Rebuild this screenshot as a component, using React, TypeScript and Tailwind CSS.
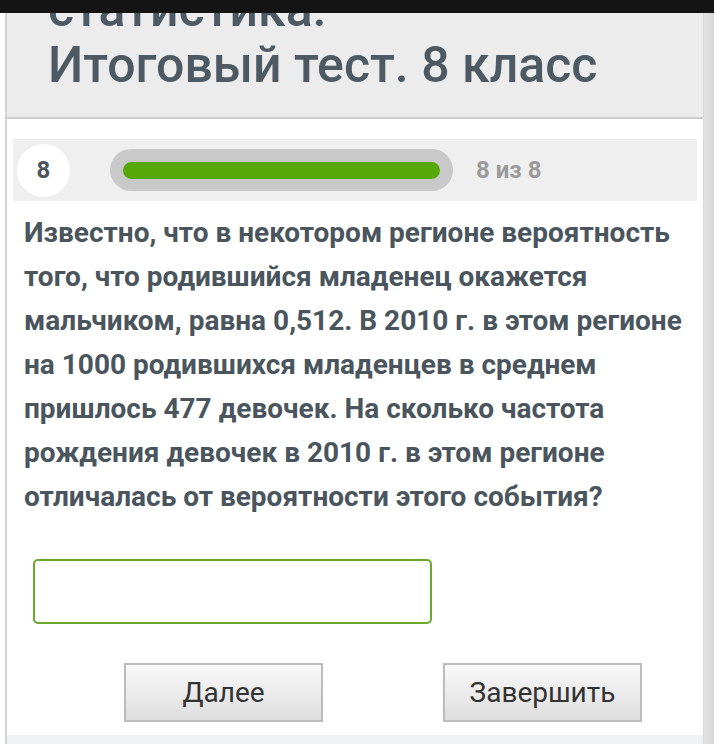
import React from 'react';

const lines = [
  'Известно, что в некотором регионе вероятность',
  'того, что родившийся младенец окажется',
  'мальчиком, равна 0,512. В 2010 г. в этом регионе',
  'на 1000 родившихся младенцев в среднем',
  'пришлось 477 девочек. На сколько частота',
  'рождения девочек в 2010 г. в этом регионе',
  'отличалась от вероятности этого события?',
];

export default function App() {
  return (
    <div className="relative w-[714px] h-[744px] bg-white overflow-hidden flex font-['Roboto',sans-serif]">
      <div className="w-[5px] bg-white" />
      <div className="w-[2px] bg-[#d3d3d3]" />

      <main className="w-[696px] flex flex-col bg-white">
        {/* header */}
        <div className="h-[119px] shrink-0 bg-[#ececec] border-b-2 border-[#cdcdcd] overflow-hidden pl-[41px]">
          <div className="mt-[-19px] text-[50px] leading-[56px] font-medium text-[#4e5a63]">
            <div>статистика:</div>
            <div>Итоговый тест. 8 класс</div>
          </div>
        </div>

        {/* progress */}
        <div className="mt-[20px] ml-[6px] w-[684px] h-[62px] bg-[#efefef] flex items-center pl-[4px]">
          <div className="w-[53px] h-[53px] rounded-full bg-white flex items-center justify-center text-[24px] font-bold text-[#4a555d]">
            8
          </div>
          <div className="ml-[40px] w-[343px] h-[42px] rounded-full bg-[#c9c9c9] flex items-center px-[13px]">
            <div className="w-full h-[17px] rounded-full bg-[#56a709]" />
          </div>
          <div className="ml-[23px] text-[24px] font-bold text-[#9a9a9a]">8 из 8</div>
        </div>

        {/* question */}
        <div className="mt-[10px] pl-[17px] text-[28px] leading-[44px] font-bold text-[#4a555d] whitespace-nowrap">
          {lines.map((l, i) => (
            <div key={i}>{l}</div>
          ))}
        </div>

        {/* answer */}
        <input
          type="text"
          className="mt-[40px] ml-[26px] w-[399px] h-[65px] shrink-0 border-2 border-[#6aaa2a] rounded-[5px] bg-white px-3 text-[24px] outline-none"
        />

        {/* buttons */}
        <div className="mt-[39px] ml-[117px] flex gap-[120px]">
          <button className="w-[199px] h-[59px] border-2 border-[#bcbcbc] bg-gradient-to-b from-[#f9f9f9] to-[#dedede] text-[28px] text-[#333333]">
            Далее
          </button>
          <button className="w-[199px] h-[59px] border-2 border-[#bcbcbc] bg-gradient-to-b from-[#f9f9f9] to-[#dedede] text-[28px] text-[#333333]">
            Завершить
          </button>
        </div>

        <div className="mt-auto h-[9px] bg-[#f0f1f3]" />
      </main>

      <div className="w-[1px] bg-[#d9d9d9]" />
      <div className="flex-1 bg-gradient-to-r from-[#e4e4e4] to-[#d6d6d6]" />

      <div className="absolute top-0 left-0 right-0 h-[13px] bg-[#141414]" />
    </div>
  );
}
